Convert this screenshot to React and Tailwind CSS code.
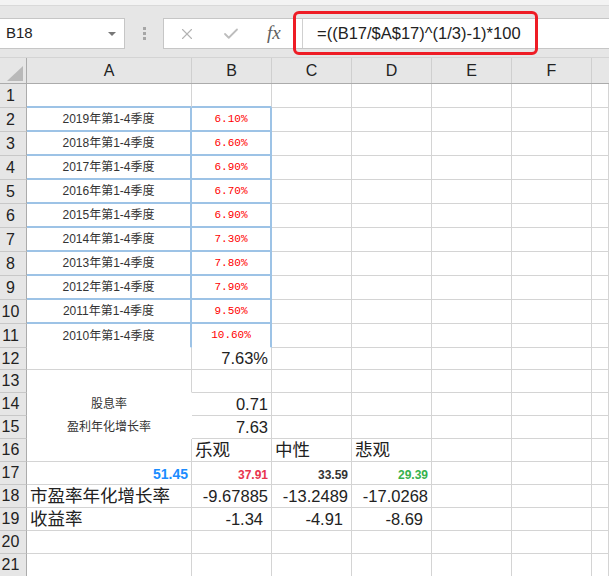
import React from 'react';
import { X, Check } from 'lucide-react';

const FONT = { fontFamily: '"Liberation Sans", "Noto Sans CJK SC", sans-serif' };

// border presets for the A/B block (selection outline is light blue)
const BLUE_TOP = 'border-r border-b-2 border-r-[#d4d4d4] border-b-[#9dc3e6]';
const BLUE_MID = 'border-r-2 border-b-2 border-[#9dc3e6]';
const BLUE_END = 'border-r-2 border-b border-r-[#9dc3e6] border-b-white';
const PLAIN = 'border-r border-b border-[#d4d4d4]';
const OPEN_B = 'border-r border-b border-r-[#d4d4d4] border-b-white';
const OPEN = 'border-r border-b border-white';

const season = 'justify-center text-[12px] text-[#333]';
const pct = 'justify-center text-[11px] text-[#ff0000] font-["Liberation_Mono"]';
const num = 'justify-end pr-[3px] text-[16.5px] text-[#222]';
const numPad = 'justify-end pr-[8px] text-[16.5px] text-[#222]';
const word = 'justify-start pl-[3px] text-[17.5px] text-[#222]';

const years = [2019, 2018, 2017, 2016, 2015, 2014, 2013, 2012, 2011, 2010];
const rates = ['6.10%', '6.60%', '6.90%', '6.70%', '6.90%', '7.30%', '7.80%', '7.90%', '9.50%', '10.60%'];

const rows = [
  { n: 1, h: 'h-[24px]', cells: [{ b: BLUE_TOP }, { b: BLUE_TOP }] },
  ...years.map((y, i) => ({
    n: i + 2,
    h: 'h-[24px]',
    cells: [
      { b: i === 9 ? BLUE_END : BLUE_MID, c: season, t: `${y}年第1-4季度` },
      { b: i === 9 ? BLUE_END : BLUE_MID, c: pct, t: rates[i] },
    ],
  })),
  { n: 12, h: 'h-[22px]', cells: [{}, { c: num, t: '7.63%' }] },
  { n: 13, h: 'h-[23px]', cells: [{ b: OPEN_B }, {}] },
  { n: 14, h: 'h-[23px]', cells: [{ b: OPEN, c: season, t: '股息率' }, { c: num, t: '0.71' }] },
  { n: 15, h: 'h-[23px]', cells: [{ b: OPEN, c: season, t: '盈利年化增长率' }, { c: num, t: '7.63' }] },
  { n: 16, h: 'h-[23px]', cells: [{}, { c: word, t: '乐观' }, { c: word, t: '中性' }, { c: word, t: '悲观' }] },
  {
    n: 17,
    h: 'h-[23px]',
    cells: [
      { c: 'justify-end pr-[3px] pt-[2px] text-[14px] font-bold text-[#1a8cff]', t: '51.45' },
      { c: 'justify-end pr-[3px] pt-[3px] text-[12px] font-bold text-[#e8344e]', t: '37.91' },
      { c: 'justify-end pr-[3px] pt-[3px] text-[12px] font-bold text-[#333]', t: '33.59' },
      { c: 'justify-end pr-[3px] pt-[3px] text-[12px] font-bold text-[#37b24d]', t: '29.39' },
    ],
  },
  {
    n: 18,
    h: 'h-[23px]',
    cells: [{ c: word, t: '市盈率年化增长率' }, { c: num, t: '-9.67885' }, { c: num, t: '-13.2489' }, { c: num, t: '-17.0268' }],
  },
  {
    n: 19,
    h: 'h-[23px]',
    cells: [{ c: word, t: '收益率' }, { c: numPad, t: '-1.34' }, { c: numPad, t: '-4.91' }, { c: numPad, t: '-8.69' }],
  },
  { n: 20, h: 'h-[23px]', cells: [] },
  { n: 21, h: 'h-[23px]', cells: [] },
];

const widths = ['w-[165px]', 'w-[80px]', 'w-[80px]', 'w-[80px]', 'w-[80px]', 'w-[80px]'];

function Row({ row }) {
  return (
    <div className={`flex ${row.h}`}>
      <div className="w-[27px] shrink-0 flex items-center justify-center pr-[5px] bg-[#e6e6e6] border-r border-b border-r-[#ababab] border-b-[#c8c8c8] text-[16px] text-[#222]">
        {row.n}
      </div>
      {widths.map((w, i) => {
        const cell = row.cells[i] || {};
        return (
          <div key={i} className={`${w} shrink-0 flex items-center whitespace-nowrap overflow-visible ${cell.b || PLAIN} ${cell.c || ''}`}>
            {cell.t}
          </div>
        );
      })}
      <div className={`flex-1 ${PLAIN}`} />
    </div>
  );
}

export default function App() {
  return (
    <div className="relative w-[609px] h-[576px] overflow-hidden bg-white" style={FONT}>
      {/* toolbar */}
      <div className="h-[6px] bg-[#f3f3f3] border-b border-[#d9d9d9]" />
      <div className="h-[51px] bg-[#e6e6e6] flex items-start pt-[12px]">
        <div className="w-[125px] h-[31px] bg-white border border-l-0 border-[#c6c6c6] flex items-center justify-between pl-[6px] pr-[8px]">
          <span className="text-[15px] text-[#222]">B18</span>
          <span className="w-0 h-0 border-l-[4px] border-r-[4px] border-t-[4px] border-l-transparent border-r-transparent border-t-[#777]" />
        </div>
        <div className="w-[38px] h-[31px] flex flex-col items-center justify-center gap-[2px]">
          <span className="w-[3px] h-[3px] bg-[#a6a6a6]" />
          <span className="w-[3px] h-[3px] bg-[#a6a6a6]" />
          <span className="w-[3px] h-[3px] bg-[#a6a6a6]" />
        </div>
        <div className="flex-1 h-[31px] bg-white border border-r-0 border-[#c6c6c6] flex items-center">
          <div className="w-[139px] h-full flex items-center border-r border-[#d0d0d0]">
            <X className="ml-[14px] w-[18px] h-[18px] text-[#b3b3b3]" strokeWidth={1.5} />
            <Check className="ml-[26px] w-[18px] h-[18px] text-[#bdbdbd]" strokeWidth={2.4} />
            <span className="ml-[27px] italic text-[19px] text-[#606060] font-['Liberation_Serif']">fx</span>
          </div>
          <span className="ml-[14px] text-[16.5px] text-[#222]">=((B17/$A$17)^(1/3)-1)*100</span>
        </div>
      </div>

      {/* column headers */}
      <div className="flex h-[27px] bg-[#e6e6e6] border-t border-b border-t-[#d4d4d4] border-b-[#ababab]">
        <div className="w-[27px] shrink-0 border-r border-[#ababab] flex items-end justify-end pr-[3px] pb-[2px]">
          <div className="w-0 h-0 border-l-[16px] border-t-[15px] border-l-transparent border-t-transparent border-b-0 border-r-0 relative">
            <span className="absolute -left-[16px] -top-[15px] w-0 h-0 border-b-[15px] border-l-[16px] border-b-[#b9b9b9] border-l-transparent" />
          </div>
        </div>
        {['A', 'B', 'C', 'D', 'E', 'F'].map((l, i) => (
          <div key={l} className={`${widths[i]} shrink-0 border-r border-[#cfcfcf] flex items-center justify-center text-[16px] text-[#222]`}>
            {l}
          </div>
        ))}
        <div className="flex-1" />
      </div>

      {/* grid */}
      {rows.map((r) => (
        <Row key={r.n} row={r} />
      ))}

      {/* red annotation box around the formula */}
      <div className="absolute left-[293px] top-[11px] w-[245px] h-[44px] border-[3px] border-[#ee1c25] rounded-[6px]" />
    </div>
  );
}
